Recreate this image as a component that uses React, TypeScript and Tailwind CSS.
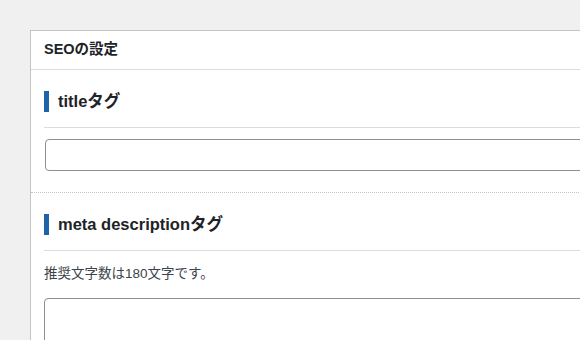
import React from 'react'

const font = {fontFamily: '"Liberation Sans", "Noto Sans CJK JP", sans-serif'}

const SectionHeading = ({label}: {label: string}) => (
  <h3 className="flex items-center gap-[9px] pb-[15px] border-b border-[#dcdcde] text-[16.5px] font-bold leading-[21px] text-[#1d2327]">
    <span className="block w-[5px] h-[21px] bg-[#1e63a6]" />
    {label}
  </h3>
)

const App = () => {
  return (
    <div className="w-[580px] h-[340px] overflow-hidden bg-[#f0f0f1] pt-[30px] pl-[30px]" style={font}>
      <div className="w-[600px] bg-white border border-[#c3c4c7]">
        {/* ヘッダー */}
        <div className="h-[39px] flex items-center px-[13px] border-b border-[#dcdcde] text-[14.5px] font-bold text-[#1d2327]">
          SEOの設定
        </div>

        {/* titleタグ */}
        <div className="px-[13px] pt-[21px] pb-[21px] border-b border-dotted border-[#c3c4c7]">
          <SectionHeading label="titleタグ" />
          <input
            type="text"
            className="block mt-[11px] ml-px w-full h-[32px] border border-[#8c8f94] rounded-[4px] bg-white"
          />
        </div>

        {/* meta descriptionタグ */}
        <div className="px-[13px] pt-[21px]">
          <SectionHeading label="meta descriptionタグ" />
          <p className="mt-[14px] text-[13.5px] leading-[18px] text-[#3c434a]">推奨文字数は180文字です。</p>
          <textarea className="block mt-[15px] w-full h-[80px] border border-[#8c8f94] rounded-[4px] bg-white resize-none" />
        </div>
      </div>
    </div>
  )
}

export default App
